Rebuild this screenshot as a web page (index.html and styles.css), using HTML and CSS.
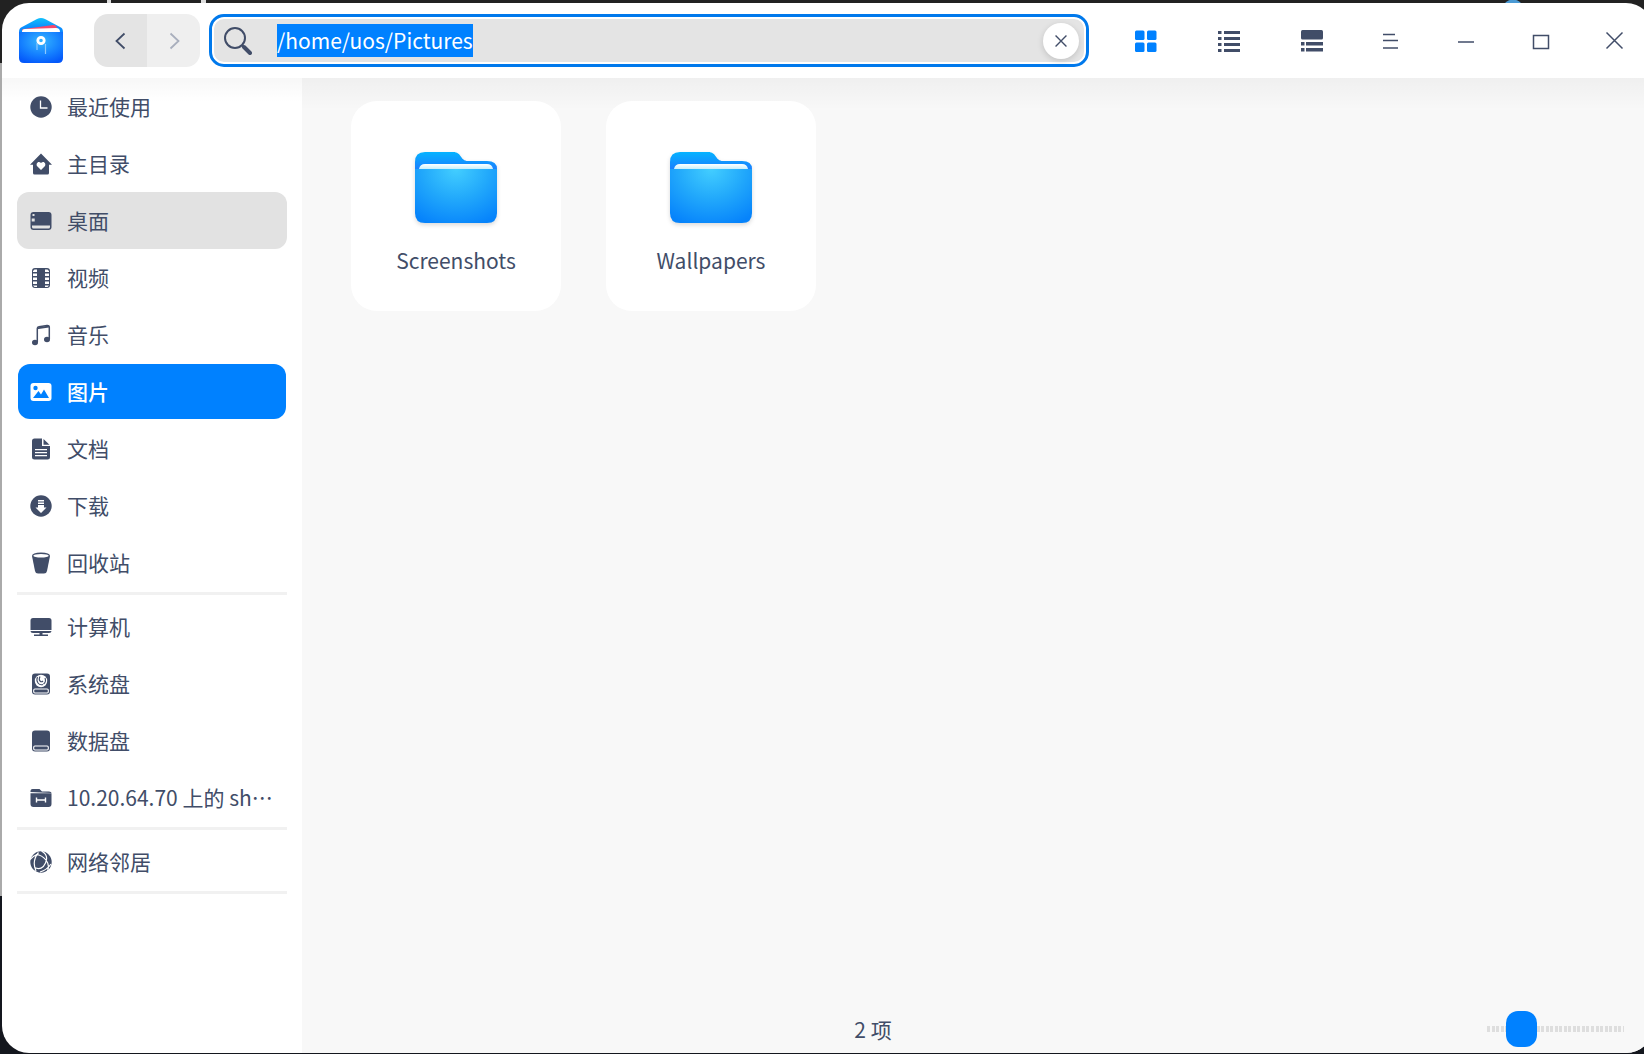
FILE: index.html
```html
<!DOCTYPE html>
<html lang="zh-CN">
<head>
    <meta charset="UTF-8">
    <meta name="viewport" content="width=device-width, initial-scale=1.0">
    <title>文件管理器</title>
    <link rel="stylesheet" href="styles.css">
</head>
<body>
    <div class="window">
        <!-- Title bar -->
        <header>
            <svg class="logo" viewBox="0 0 44 46">
                <defs>
                    <linearGradient id="logo-back" x1="0" y1="0" x2="0" y2="1">
                        <stop offset="0" stop-color="#12c0fb"/>
                        <stop offset="0.4" stop-color="#0a8dff"/>
                    </linearGradient>
                    <radialGradient id="logo-front" cx="0.5" cy="0.3" r="0.75">
                        <stop offset="0" stop-color="#35b6ff"/>
                        <stop offset="0.6" stop-color="#147fff"/>
                        <stop offset="1" stop-color="#0458fa"/>
                    </radialGradient>
                </defs>
                <path fill="url(#logo-back)" d="M0 14q0-4 3-5L18 1q4-2 8 0l15 8q3 1 3 5v10H0z"/>
                <path fill="#f4486c" d="M3 12q0-1 2-1l29-4q2 0 3 1l3 6H3z"/>
                <path fill="#fff" d="M3 14q0-3 3-3l31-1q4 0 4 4H3z"/>
                <path fill="url(#logo-front)" d="M0 14h44v26q0 5-5 5H5q-5 0-5-5z"/>
                <circle cx="22" cy="22.500" r="3.200" fill="none" stroke="#fff" stroke-width="2.800"/>
                <path fill="none" stroke="#8cc8ff" stroke-width="1.200" d="M18 25v7M26.500 26v10"/>
            </svg>

            <div class="history">
                <button type="button" aria-label="后退">
                    <svg class="icon" viewBox="0 0 22 22"><path class="line" stroke-width="1.8" d="M14.500 3.500L6.500 11l8 7.500"/></svg>
                </button>
                <button type="button" aria-label="前进" disabled>
                    <svg class="icon" viewBox="0 0 22 22"><path class="line" stroke-width="1.8" d="M7.500 3.500l8 7.500-8 7.500"/></svg>
                </button>
            </div>

            <form class="search">
                <svg class="search-icon" viewBox="0 0 28 28">
                    <circle class="line" cx="11" cy="11" r="10" stroke-width="2"/>
                    <path class="line" stroke-width="2" d="M18 18l3 3"/>
                    <path class="line" stroke-width="4" stroke-linecap="round" d="M20 20l6 6"/>
                </svg>
                <input type="text" id="path" aria-label="路径" value="/home/uos/Pictures" spellcheck="false" autocomplete="off">
                <button type="button" id="btn-clear" class="clear" aria-label="清除">
                    <svg class="icon" viewBox="0 0 22 22"><path class="line" stroke-width="1.5" d="M5 5l12 12M17 5L5 17"/></svg>
                </button>
            </form>

            <div class="views">
                <button type="button" class="active" aria-label="图标视图">
                    <svg class="icon" viewBox="0 0 22 22">
                        <rect width="9.500" height="9.500" y=".5" rx="1.500"/><rect x="12" y=".5" width="9.500" height="9.500" rx="1.500"/>
                        <rect y="12.500" width="9.500" height="9.500" rx="1.500"/><rect x="12" y="12.500" width="9.500" height="9.500" rx="1.500"/>
                    </svg>
                </button>
                <button type="button" aria-label="列表视图">
                    <svg class="icon" viewBox="0 0 22 22">
                        <path d="M0 1h3.500v3H0zM6 1h16v3H6zM0 7h3.500v3H0zM6 7h16v3H6zM0 13h3.500v3H0zM6 13h16v3H6zM0 19h3.500v3H0zM6 19h16v3H6z"/>
                    </svg>
                </button>
                <button type="button" aria-label="分栏视图">
                    <svg class="icon" viewBox="0 0 22 22">
                        <rect width="22" height="9.500" rx="1.500"/>
                        <path d="M0 12h3.500v3.500H0zM5 12h17v3.500H5zM0 18h3.500v3.500H0zM5 18h17v3.500H5z"/>
                    </svg>
                </button>
            </div>

            <div class="controls">
                <button type="button" aria-label="菜单">
                    <svg class="icon" viewBox="0 0 22 22"><path class="line" stroke-width="1.5" d="M3 4.500h12M3 10.500h15M3 18h15"/></svg>
                </button>
                <button type="button" aria-label="最小化">
                    <svg class="icon" viewBox="0 0 22 22"><path class="line" stroke-width="1.500" d="M3 12h16"/></svg>
                </button>
                <button type="button" aria-label="最大化">
                    <svg class="icon" viewBox="0 0 22 22"><rect class="line" x="3.500" y="5.500" width="15" height="13" stroke-width="1.500"/></svg>
                </button>
                <button type="button" aria-label="关闭">
                    <svg class="icon" viewBox="0 0 22 22"><path class="line" stroke-width="1.500" d="M1.500 2.500l16 16M17.500 2.500l-16 16"/></svg>
                </button>
            </div>
        </header>

        <div class="main">
            <!-- Places -->
            <aside>
                <nav>
                    <ul>
                        <li><a href="#">
                            <svg class="icon" viewBox="0 0 22 22"><circle cx="11" cy="11" r="10.700"/><path class="cut" stroke-width="1.300" d="M10.500 4.500V12H17.500"/></svg>
                            <span>最近使用</span></a></li>
                        <li><a href="#">
                            <svg class="icon" viewBox="0 0 22 22">
                                <path d="M11 .5L22 11.700h-3V20q0 1.500-1.500 1.500h-13Q3 21.500 3 20v-8.300H0z"/>
                                <path class="hole" d="M11 17L7.500 13.600C5 10.700 8.500 7 11 10c2.500-3 6 .7 3.500 3.600z"/>
                            </svg>
                            <span>主目录</span></a></li>
                        <li><a href="#" class="hover">
                            <svg class="icon" viewBox="0 0 22 22">
                                <rect x=".5" y="2" width="21" height="18" rx="3"/>
                                <path class="hole" d="M2.500 4h2v2h-2zM1.700 8.500h3v3h-3zM2 15.500h18v1.500q0 1.500-1.500 1.500h-15Q2 18.500 2 17z"/>
                            </svg>
                            <span>桌面</span></a></li>
                        <li><a href="#">
                            <svg class="icon" viewBox="0 0 22 22">
                                <rect x="2" y="1" width="18" height="20" rx="3"/>
                                <path class="hole" d="M4.500 2.500H7v2.500H3v-1zM3 6.500h4V9H3zM3 10.500h4V13H3zM3 14.500h4V17H3zM3 18.500h4V20H4.500zM15 2.500h2.500L19 4v1h-4zM15 6.500h4V9h-4zM15 10.500h4V13h-4zM15 14.500h4V17h-4zM15 18.500h4L17.500 20H15z"/>
                            </svg>
                            <span>视频</span></a></li>
                        <li><a href="#">
                            <svg class="icon" viewBox="0 0 22 22">
                                <ellipse cx="5" cy="18.500" rx="3" ry="2.700"/><ellipse cx="17" cy="15.500" rx="3" ry="2.700"/>
                                <path class="line" stroke-width="1.500" d="M7.300 18V4.500Q7.300 3 9 2.700L17 1.500q2.300-.3 2.300 1.800V15"/>
                                <path d="M7 3.500l12-2v2L7 5.300z"/>
                            </svg>
                            <span>音乐</span></a></li>
                        <li><a href="#" class="selected">
                            <svg class="icon" viewBox="0 0 22 22">
                                <rect x=".5" y="2" width="21" height="18" rx="3"/>
                                <circle class="hole" cx="5.500" cy="7" r="2.200"/>
                                <path class="hole" d="M3 17l5.500-7 2.500 3.500L14 8.500l5 8.500z"/>
                            </svg>
                            <span>图片</span></a></li>
                        <li><a href="#">
                            <svg class="icon" viewBox="0 0 22 22">
                                <path d="M4.500.5H12V8h8v11q0 2.500-2.500 2.500h-13Q2 21.500 2 19V3Q2 .5 4.500.5z"/><path d="M13.500 1l6 5.700h-6z"/>
                                <path class="cut" stroke-width="1.200" d="M5 11.700h12M5 14.700h12M5 17.700h12"/>
                            </svg>
                            <span>文档</span></a></li>
                        <li><a href="#">
                            <svg class="icon" viewBox="0 0 22 22">
                                <circle cx="11" cy="11" r="10.700"/>
                                <path class="hole" d="M8 5h6v1.400H8zM8 7.500h6v1.400H8zM8 10h6v2.500h2.500L11 18l-5.500-5.500H8z"/>
                            </svg>
                            <span>下载</span></a></li>
                        <li><a href="#">
                            <svg class="icon" viewBox="0 0 22 22">
                                <path d="M2 4q0-3.500 9-3.500T20 4l-3 15q-.5 2.500-3 2.500H8q-2.500 0-3-2.500z"/>
                                <ellipse class="hole" cx="11" cy="3.700" rx="7.700" ry="1.800"/>
                            </svg>
                            <span>回收站</span></a></li>
                    </ul>
                    <ul>
                        <li><a href="#">
                            <svg class="icon" viewBox="0 0 22 22">
                                <path d="M3 2h16q2.500 0 2.500 2.500V14H.5V4.500Q.5 2 3 2zM.5 15h21q0 2-2.500 2H3Q.5 17 .5 15zM9.500 17h3v1.500h-3zM4 18.500h14V20H4z"/>
                            </svg>
                            <span>计算机</span></a></li>
                        <li><a href="#">
                            <svg class="icon" viewBox="0 0 22 22">
                                <rect x="2" y=".5" width="18" height="21" rx="3"/>
                                <circle class="hole" cx="11" cy="8" r="6.200"/>
                                <path class="line" stroke-width="1.100" d="M7.500 4q-1.500 3.500.5 6t5 1.500M10 3.500q-1.500 3 0 4.500t3 0M15 5q1.500 4-1.500 6"/>
                                <rect class="cut" x="3.700" y="16" width="14.600" height="4" rx="1.200" stroke-width="1.100"/>
                            </svg>
                            <span>系统盘</span></a></li>
                        <li><a href="#">
                            <svg class="icon" viewBox="0 0 22 22">
                                <rect x="2" y=".5" width="18" height="21" rx="3"/>
                                <rect class="cut" x="3.700" y="16" width="14.600" height="4" rx="1.200" stroke-width="1.100"/>
                            </svg>
                            <span>数据盘</span></a></li>
                        <li><a href="#">
                            <svg class="icon" viewBox="0 0 22 22">
                                <path d="M.5 5V4q0-2 2-2h7l2.500 2.500h7q2.500 0 2.500 1.500zM.5 6.300h21V17q0 3-3 3h-15q-3 0-3-3z"/>
                                <path class="cut" stroke-width="1.400" d="M6.500 10.500v5M15.500 10.500v5M6.500 13h9"/>
                            </svg>
                            <span>10.20.64.70 上的 sh…</span></a></li>
                    </ul>
                    <ul>
                        <li><a href="#">
                            <svg class="icon" viewBox="0 0 22 22">
                                <circle cx="11" cy="11" r="10.700"/>
                                <path class="cut" stroke-width="1.200" d="M8.500 1.500Q1.500 10 6 20M6 3.500Q12 4 16 9t1.500 11M4.500 16.500Q12 20 15.500 12T11.500 0M0 8.500Q3.500 5 8.500 2.500M10 21Q17 19 21 13"/>
                            </svg>
                            <span>网络邻居</span></a></li>
                    </ul>
                </nav>
            </aside>

            <!-- Folder contents -->
            <div class="content">
                <div class="files">
                    <a href="#" class="file">
                        <svg class="folder" viewBox="0 0 82 71">
                            <defs>
                                <linearGradient id="folder-back" x1="0" y1="0" x2="0" y2="1">
                                    <stop offset="0" stop-color="#05b3ff"/>
                                    <stop offset="1" stop-color="#1a80ff"/>
                                </linearGradient>
                                <linearGradient id="folder-paper" x1="0" y1="0" x2="0" y2="1">
                                    <stop offset="0" stop-color="#fff"/>
                                    <stop offset="1" stop-color="#c8effc"/>
                                </linearGradient>
                                <radialGradient id="folder-front" cx="0.5" cy="0" r="1" gradientTransform="translate(0.1 0) scale(0.8 1.1)">
                                    <stop offset="0" stop-color="#43ceff"/>
                                    <stop offset="0.5" stop-color="#22a9fb"/>
                                    <stop offset="1" stop-color="#0683fb"/>
                                </radialGradient>
                            </defs>
                            <path fill="url(#folder-back)" d="M0 17V10Q0 0 10 0H38C47 0 45 9 53 9H72q10 0 10 8z"/>
                            <path fill="url(#folder-paper)" d="M4 17q1-5 6-5h62q5 0 6 5z"/>
                            <path fill="url(#folder-front)" d="M0 17h82v44q0 10-10 10H10Q0 71 0 61z"/>
                        </svg>
                        <span>Screenshots</span>
                    </a>
                    <a href="#" class="file">
                        <svg class="folder" viewBox="0 0 82 71">
                            <path fill="url(#folder-back)" d="M0 17V10Q0 0 10 0H38C47 0 45 9 53 9H72q10 0 10 8z"/>
                            <path fill="url(#folder-paper)" d="M4 17q1-5 6-5h62q5 0 6 5z"/>
                            <path fill="url(#folder-front)" d="M0 17h82v44q0 10-10 10H10Q0 71 0 61z"/>
                        </svg>
                        <span>Wallpapers</span>
                    </a>
                </div>

                <footer>
                    <p>2 项</p>
                    <input type="range" class="zoom" aria-label="图标大小" min="0" max="100" value="18">
                </footer>
            </div>
        </div>
    </div>

    <script>
        const path = document.getElementById('path');
        const btnClear = document.getElementById('btn-clear');

        // The address is ready to be typed over
        path.focus();
        path.select();

        btnClear.addEventListener('click', () => {
            path.value = '';
            path.focus();
        });
    </script>
</body>
</html>
```

FILE: styles.css
```css
* {
    box-sizing: border-box;
}

/* Desktop behind the window */
body {
    margin: 0;
    height: 100vh;
    overflow: hidden;
    display: flex;
    font-family: "Noto Sans CJK SC", sans-serif;
    font-size: 21px;
    line-height: 30px;
    color: #414d68;
    background:
        radial-gradient(circle at 1513px 10px, #4a9ad4 10px, transparent 11px),
        linear-gradient(#ddd, #ddd) 107px 0 / 4px 3px no-repeat,
        linear-gradient(#ddd, #ddd) 201px 0 / 5px 3px no-repeat,
        linear-gradient(#aaa, #aaa) 0 63px / 2px 833px no-repeat,
        linear-gradient(#222 50%, #14171e 50%);
}

.window {
    flex: 1;
    margin: 3px -9px 1px 2px;
    display: flex;
    flex-direction: column;
    background-color: #fff;
    border-radius: 27px;
    overflow: hidden;
}

button {
    padding: 0;
    border: 0;
    background: none;
    color: inherit;
    display: flex;
    align-items: center;
    justify-content: center;
}

a {
    color: inherit;
    text-decoration: none;
}

/* Icons */
.icon {
    width: 22px;
    height: 22px;
    flex-shrink: 0;
    fill: currentColor;
}

.line {
    fill: none;
    stroke: currentColor;
}

.cut {
    fill: none;
    stroke: #fff;
}

.hole {
    fill: #fff;
}

/* Title bar */
header {
    height: 75px;
    display: flex;
    align-items: center;
}

.logo {
    width: 44px;
    height: 46px;
    margin: 0 31px 0 17px;
}

.history {
    display: flex;
    height: 53px;
    margin-right: 9px;
    border-radius: 14px;
    overflow: hidden;
}

.history button {
    width: 53px;
    background-color: #e4e4e4;
}

.history button:disabled {
    background-color: #efefef;
    color: #a9afbd;
}

.search {
    flex: 1;
    height: 53px;
    margin-right: 15px;
    padding: 0 7px 0 12px;
    display: flex;
    align-items: center;
    background-color: #e4e4e4;
    border: 3px solid #0079ec;
    border-radius: 15px;
    box-shadow: inset 0 0 0 2px #fff;
}

.search-icon {
    width: 28px;
    height: 28px;
    margin-right: 25px;
}

.search input {
    flex: 1;
    min-width: 0;
    height: 33px;
    padding: 0;
    border: 0;
    outline: 0;
    background: none;
    font: inherit;
    line-height: 33px;
    color: inherit;
}

.search input::selection {
    background-color: #0081ff;
    color: #fff;
}

.clear {
    width: 36px;
    height: 36px;
    border-radius: 18px;
    background-color: #fff;
    box-shadow: 0 2px 6px rgba(0, 0, 0, 0.15);
}

.clear .icon {
    width: 20px;
    height: 20px;
}

.views, .controls {
    display: flex;
}

.views button {
    width: 83px;
    height: 53px;
}

.views .active {
    color: #0081ff;
}

.controls button {
    width: 75px;
    height: 53px;
}

.main {
    flex: 1;
    display: flex;
}

/* Sidebar */
aside {
    width: 300px;
    padding: 0 15px;
    background: linear-gradient(rgba(0, 0, 0, 0.03), transparent 24px);
}

ul {
    list-style: none;
    margin: 0 0 3px;
    padding: 0 0 1px;
    border-bottom: 3px solid #f1f1f1;
}

li {
    height: 57px;
    display: flex;
}

li a {
    flex: 1;
    display: flex;
    align-items: center;
    gap: 15px;
    padding-left: 13px;
    border-radius: 12px;
    white-space: nowrap;
}

/* The font sits low in its line */
li span {
    padding-bottom: 2px;
}

li .hover {
    background-color: #e2e2e2;
}

li .hover .hole {
    fill: #e2e2e2;
}

li .selected {
    background-color: #0081ff;
    background-clip: padding-box;
    border: 1px solid transparent;
    border-radius: 13px;
    padding-left: 12px;
    color: #fff;
    font-weight: 500;
}

li .selected .hole {
    fill: #0081ff;
}

/* Folder contents */
.content {
    flex: 1;
    display: flex;
    flex-direction: column;
    background: linear-gradient(rgba(0, 0, 0, 0.035), transparent 32px) #f8f8f8;
}

.files {
    flex: 1;
    display: flex;
    flex-wrap: wrap;
    align-content: flex-start;
    gap: 45px;
    padding: 23px 49px;
}

.file {
    width: 210px;
    height: 210px;
    padding-top: 51px;
    display: flex;
    flex-direction: column;
    align-items: center;
    gap: 22px;
    border-radius: 26px;
    background-color: #fff;
}

.folder {
    width: 82px;
    height: 71px;
    filter: drop-shadow(0 2px 2px rgba(0, 0, 0, 0.15));
}

/* Status bar */
footer {
    display: flex;
    align-items: center;
    height: 48px;
    padding-right: 29px;
}

footer p {
    flex: 1;
    margin: 0;
    text-align: center;
}

/* Icon size slider */
.zoom {
    appearance: none;
    width: 137px;
    height: 36px;
    margin: 0 0 0 43px;
    background: none;
}

.zoom::-webkit-slider-runnable-track {
    height: 6px;
    background: repeating-linear-gradient(90deg, #dedede 0 2.2%, transparent 2.2% 3.3%);
}

.zoom::-webkit-slider-thumb {
    appearance: none;
    width: 31px;
    height: 36px;
    margin-top: -15px;
    border-radius: 12px;
    background-color: #0081ff;
}
```
